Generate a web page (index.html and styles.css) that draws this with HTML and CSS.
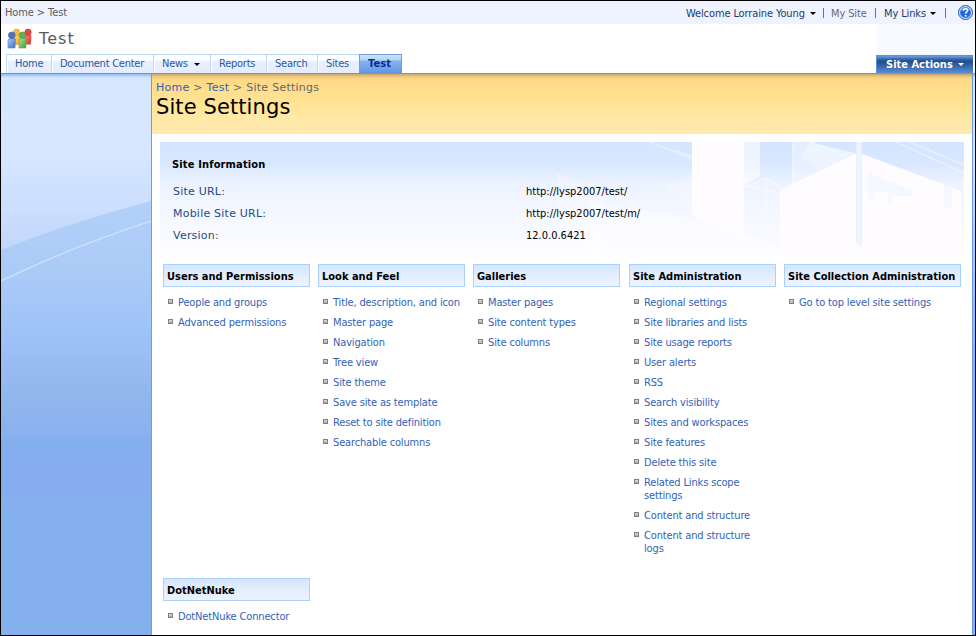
FILE: index.html
```html
<!DOCTYPE html>
<html lang="en">
<head>
<meta charset="utf-8">
<title>Site Settings</title>
<link rel="stylesheet" href="styles.css">
</head>
<body>
<div class="page">
  <div class="global">
    <div class="global-crumb"><span>Home &gt; Test</span></div>
    <div class="global-links">
      <a class="welcome"><span>Welcome Lorraine Young</span></a><i class="caret"></i>
      <b class="sep"></b><a class="mysite"><span>My Site</span></a><b class="sep mid"></b>
      <a class="mylinks"><span>My Links</span></a><i class="caret"></i><b class="sep last"></b>
      <svg class="help" width="15" height="15" viewBox="0 0 15 15">
        <circle cx="7.5" cy="7.5" r="7" fill="#cfe2fb" stroke="#2456a4"/>
        <circle cx="7.5" cy="7.5" r="5.4" fill="#2467de"/>
        <path d="M2.6 6 A5 5 0 0 1 12.4 6 Q7.5 4 2.6 6Z" fill="#5d9af0"/>
        <path d="M5.4 5.7 Q5.5 3.8 7.5 3.8 Q9.6 3.8 9.6 5.6 Q9.6 6.6 8.4 7.2 Q7.6 7.7 7.6 8.8" fill="none" stroke="#fff" stroke-width="1.5"/>
        <rect x="6.8" y="10" width="1.7" height="1.6" fill="#fff"/>
      </svg>
    </div>
  </div>

  <div class="header">
    <div class="header-left">
      <div class="site-title">
        <svg width="26" height="22" viewBox="0 0 26 22">
          <defs>
            <linearGradient id="y" x2="1" y2="1"><stop offset="0" stop-color="#ffe27a"/><stop offset="1" stop-color="#f09c1c"/></linearGradient>
            <linearGradient id="r" x2="1" y2="1"><stop offset="0" stop-color="#ff8a80"/><stop offset="1" stop-color="#d92b2b"/></linearGradient>
            <linearGradient id="b" x2="1" y2="1"><stop offset="0" stop-color="#b5ccf4"/><stop offset="1" stop-color="#3a68c4"/></linearGradient>
            <linearGradient id="g" x2="1" y2="1"><stop offset="0" stop-color="#b4e394"/><stop offset="1" stop-color="#3b9c36"/></linearGradient>
          </defs>
          <path d="M6.5 8.5 Q10 5.5 13.5 8 V17 H6.5Z" fill="url(#y)"/>
          <circle cx="9.6" cy="4.3" r="3.2" fill="#f8bb3a" stroke="#e79a21" stroke-width=".6"/>
          <path d="M17.5 8 Q21 5.5 24.4 7.5 L23.8 16.5 H17.5Z" fill="url(#r)"/>
          <circle cx="21" cy="4.3" r="3.2" fill="#e84545" stroke="#c22d2d" stroke-width=".6"/>
          <path d="M1 11.5 Q4.5 9.5 8.6 11 L8 20 H1Z" fill="url(#b)" stroke="#5a7dc5" stroke-width=".6"/>
          <circle cx="4.8" cy="7.3" r="3.4" fill="#4c74c4" stroke="#4063ae" stroke-width=".6"/>
          <path d="M12 11.5 Q15 9.5 19.3 11 L18.8 20 H12Z" fill="url(#g)" stroke="#55a64b" stroke-width=".6"/>
          <circle cx="15.6" cy="7.2" r="3.3" fill="#62b14e" stroke="#45933a" stroke-width=".6"/>
        </svg>
        <span>Test</span>
      </div>
      <div class="tabs">
        <a class="tab t-home"><span>Home</span></a>
        <a class="tab t-doc"><span>Document Center</span></a>
        <a class="tab t-news"><span>News</span><i class="caret"></i></a>
        <a class="tab t-rep"><span>Reports</span></a>
        <a class="tab t-search"><span>Search</span></a>
        <a class="tab t-sites"><span>Sites</span></a>
        <a class="tab t-test active"><span>Test</span></a>
      </div>
    </div>
    <div class="header-right">
      <div class="actions"><span>Site Actions</span><i class="caret"></i></div>
    </div>
  </div>

  <div class="body">
    <div class="sidebar">
      <svg width="150" height="561" viewBox="0 0 150 561">
        <defs>
          <linearGradient id="side" gradientUnits="userSpaceOnUse" x1="0" y1="0" x2="0" y2="561">
            <stop offset="0" stop-color="#8ebcf5"/><stop offset=".007" stop-color="#d5e8ff"/><stop offset=".15" stop-color="#d7e6ff"/>
            <stop offset=".2" stop-color="#cde2ff"/><stop offset=".24" stop-color="#cddeff"/>
            <stop offset=".3" stop-color="#c2d8fb"/><stop offset="1" stop-color="#c2d8fb"/>
          </linearGradient>
          <linearGradient id="hill" gradientUnits="userSpaceOnUse" x1="0" y1="125" x2="0" y2="561">
            <stop offset="0" stop-color="#b1d0f9"/><stop offset=".17" stop-color="#abcbf7"/>
            <stop offset=".32" stop-color="#9cc2f8"/><stop offset=".37" stop-color="#9abcf5"/>
            <stop offset=".43" stop-color="#93b8ee"/><stop offset=".54" stop-color="#8bb1ee"/>
            <stop offset=".55" stop-color="#83b0ed"/><stop offset=".59" stop-color="#85adef"/>
            <stop offset=".68" stop-color="#85adf0"/><stop offset=".69" stop-color="#84b1ee"/>
            <stop offset="1" stop-color="#84b1ee"/>
          </linearGradient>
        </defs>
        <rect width="150" height="561" fill="url(#side)"/>
        <path d="M0 176 Q70 148 150 127 V561 H0Z" fill="url(#hill)"/>
        <path d="M0 207 Q70 173 150 147" fill="none" stroke="#d0e2fc" stroke-width="1.3"/>
      </svg>
    </div>
    <div class="main">
      <div class="band">
        <div class="crumb"><span><a>Home</a> &gt; <a>Test</a> &gt; Site Settings</span></div>
        <h1><span>Site Settings</span></h1>
      </div>
      <div class="info">
        <svg class="info-art" width="804" height="116" viewBox="0 0 804 116">
          <defs>
            <linearGradient id="ib" x2="0" y2="1">
              <stop offset="0" stop-color="#d4e5ff"/><stop offset=".2" stop-color="#dae8ff"/>
              <stop offset=".36" stop-color="#edf3ff"/><stop offset=".6" stop-color="#f4f7ff"/>
              <stop offset=".85" stop-color="#fafbff"/><stop offset="1" stop-color="#fffcff"/>
            </linearGradient>
          </defs>
          <rect width="804" height="116" fill="url(#ib)"/>
          <g fill="#fff" stroke="none">
            <path d="M397 31 L446 51 V116 H400Z" opacity=".25"/>
            <path d="M532 0 H584 V96 L532 74Z" fill="#fffcff"/>
            <path d="M584 0 H600 V34 L584 43Z" opacity=".6"/>
            <path d="M532 32 L505 44 L532 74Z" opacity=".18"/>
            <path d="M632 0 H650 L695 11 L632 42Z" opacity=".35"/>
            <path d="M650 0 L695 11 L660 28 L640 16Z" opacity=".3"/>
            <path d="M620 48 L696 11 V116 H620Z" fill="#fffcff"/>
            <path d="M702 12 L801 49 V116 H702Z" fill="#fffcff"/>
            <path d="M532 76 L620 104 V116 H430 V60Z" opacity=".4"/>
            <path d="M696 0 H702 V106 L696 100Z" fill="#e9f2ff"/>
          </g>
          <g fill="#f5f8ff">
            <path d="M708 31 L752 48 V54 H732 V62 H728 V50 H714 V57 H708Z"/>
            <path d="M784 44 H792 V66 H784Z"/>
          </g>
          <g fill="none" stroke="#fff" stroke-width="1" opacity=".6">
            <path d="M633 0V47M699 0V106M490 0L532 17M650 0L697 18M650 7L680 25M736 0L804 31M750 0L804 23M515 8L532 15M606 35V96M584 46L606 36L622 46M584 44L622 52"/>
          </g>
        </svg>
        <div class="info-content">
          <h2><span>Site Information</span></h2>
          <dl>
            <dt><span>Site URL:</span></dt><dd><span>http://lysp2007/test/</span></dd>
            <dt><span>Mobile Site URL:</span></dt><dd><span>http://lysp2007/test/m/</span></dd>
            <dt><span>Version:</span></dt><dd><span>12.0.0.6421</span></dd>
          </dl>
        </div>
      </div>
      <div class="groups">
        <section><h3><span>Users and Permissions</span></h3>
          <ul><li>People and groups</li><li>Advanced permissions</li></ul></section>
        <section><h3><span>Look and Feel</span></h3>
          <ul><li>Title, description, and icon</li><li>Master page</li><li>Navigation</li><li>Tree view</li><li>Site theme</li><li>Save site as template</li><li>Reset to site definition</li><li>Searchable columns</li></ul></section>
        <section><h3><span>Galleries</span></h3>
          <ul><li>Master pages</li><li>Site content types</li><li>Site columns</li></ul></section>
        <section class="admin"><h3><span>Site Administration</span></h3>
          <ul><li>Regional settings</li><li>Site libraries and lists</li><li>Site usage reports</li><li>User alerts</li><li>RSS</li><li>Search visibility</li><li>Sites and workspaces</li><li>Site features</li><li>Delete this site</li><li>Related Links scope<br>settings</li><li>Content and structure</li><li>Content and structure<br>logs</li></ul></section>
        <section class="collection"><h3><span>Site Collection Administration</span></h3>
          <ul><li>Go to top level site settings</li></ul></section>
      </div>
      <div class="groups second">
        <section><h3><span>DotNetNuke</span></h3>
          <ul><li>DotNetNuke Connector</li></ul></section>
      </div>
    </div>
    <div class="rail"></div>
  </div>
</div>
</body>
</html>
```
FILE: styles.css
```css
*, *::before { box-sizing: border-box; }
body, h1, h2, h3, ul, dl, dd { margin: 0; padding: 0; }
body {
  font: 11px/13px "DejaVu Sans Condensed", "DejaVu Sans", Tahoma, sans-serif;
  font-stretch: condensed;
  color: #000;
  white-space: nowrap;
}
.page {
  width: 976px; height: 636px; overflow: hidden;
  border: 1px solid #000; background: #fff;
  display: flex; flex-direction: column;
}
.caret {
  display: inline-block; width: 0; height: 0;
  border: 3px solid transparent; border-top-color: #000; border-bottom: 0;
}
.global {
  height: 23px; flex: none; background: #eef3ff;
  display: flex; justify-content: space-between;
}
.global-crumb { padding: 5px 0 0 4px; color: #5a5a5a; letter-spacing: -.1px; }
.global-links { display: flex; align-items: center; color: #1f3d66; padding: 1px 2px 0 0; letter-spacing: -.12px; }
.welcome { width: 120px; }
.global-links .caret { margin-left: 4px; }
.mysite { color: #6b6b6b; width: 37px; }
.mylinks { width: 42px; }
.sep { width: 1px; height: 10px; background: #6b7480; margin: 0 7px; }
.sep.mid { margin-right: 8px; }
.sep.last { margin: 0 12px 0 9px; }
.help { margin-top: -1px; }
.header { height: 49px; flex: none; display: flex; justify-content: space-between; }
.header-left { display: flex; flex-direction: column; justify-content: space-between; }
.site-title { display: flex; padding: 4px 0 0 6px; gap: 6px; }
.site-title span { font: 16px/20px "DejaVu Sans", sans-serif; color: #5a5a5a; padding-top: 1px; letter-spacing: 1.1px; }
.tabs { display: flex; padding-left: 5px; height: 19px; color: #2a5a9c; letter-spacing: -.25px; }
.tab {
  border: 1px solid #bbd8fb; border-width: 1px 0 0 1px;
  background: linear-gradient(#fff 0 5px, #e9f0ff 6px, #e4ecff);
  padding: 2px 0 0 8px; box-shadow: inset 1px 1px #fff;
}
.t-home { width: 45px; }
.t-doc { width: 102px; }
.t-news { width: 57px; display: flex; }
.t-news .caret { margin: 6px 0 0 6px; }
.t-rep { width: 56px; }
.t-search { width: 51px; }
.t-sites { width: 42px; }
.t-test {
  width: 43px; border: 1px solid #6f9de0; border-bottom: 0;
  background: linear-gradient(#cfe2fb, #b4d1f8 5px, #86b2ef 6px, #6596dc);
  color: #00309c; font-weight: bold; box-shadow: none; letter-spacing: .1px;
}
.header-right {
  width: 99px; background: #f7faff; display: flex; align-items: flex-end;
}
.actions {
  width: 97px; height: 18px; padding: 2px 0 0 9px; color: #fff; font-weight: bold;
  display: flex; border: 1px solid #5b92dc; border-width: 1px 0 0 1px;
  background: linear-gradient(#6a9fe6, #2a5a9e 4px, #234e8c 6px, #5a8ed8);
}
.actions .caret { border-top-color: #fff; margin: 5px 0 0 5px; }
.body { flex: 1; display: flex; border-top: 1px solid #6f98d0; }
.sidebar { width: 151px; border-right: 1px solid #6f9de0; background: #84b1ee; }
.sidebar svg { display: block; }
.main { width: 820px; }
.band {
  height: 60px; padding: 7px 0 0 4px;
  background: linear-gradient(#c8a56c, #f2cd7e 3px, #ffd986 6px, #ffdf8e 18px, #ffe595 32px, #ffe9a8 45px, #ffeaaf);
}
.crumb { font: 11px/14px "DejaVu Sans", sans-serif; letter-spacing: .26px; color: #666; }
.crumb a { color: #3162b8; }
h1 { font: 21px/24px "DejaVu Sans", sans-serif; letter-spacing: .1px; }
.info { margin: 8px 0 0 8px; width: 804px; height: 116px; display: grid; }
.info > * { grid-area: 1 / 1; }
.info-content { padding: 16px 0 0 12px; }
h2, h3 { font-size: 11px; line-height: 13px; font-weight: bold; }
h2 { letter-spacing: .15px; }
dl { display: grid; grid-template-columns: 354px auto; grid-auto-rows: 22px; margin-top: 10px; line-height: 22px; }
dt { color: #244b85; font-family: "DejaVu Sans", sans-serif; font-stretch: normal; letter-spacing: .22px; padding-left: 1px; }
.groups { display: flex; gap: 8px; padding: 6px 0 0 11px; height: 314px; }
.groups.second { height: auto; padding-top: 6px; }
section { width: 147px; }
.admin { margin-left: 1px; }
.collection { width: 177px; }
h3 {
  height: 23px; border: 1px solid #a9d1fb; padding: 5px 0 0 3px;
  background: linear-gradient(#d5e6ff, #e1edff 9px, #eef3ff);
}
ul { list-style: none; padding: 9px 0 0 5px; letter-spacing: -.15px; }
li { padding-left: 10px; margin-bottom: 7px; color: #3162b8; position: relative; }
li::before {
  content: ""; position: absolute; left: 0; top: 3px; width: 5px; height: 5px;
  border: 1px solid #808080; background: linear-gradient(#ddd, #aaa);
}
.rail {
  flex: 1; border-left: 1px solid #6498e0;
  background: linear-gradient(#8ebcf5, #d5e8ff 4px, #d2e4ff 90px, #a9cbf8 170px, #84b1ee 300px);
}
```
